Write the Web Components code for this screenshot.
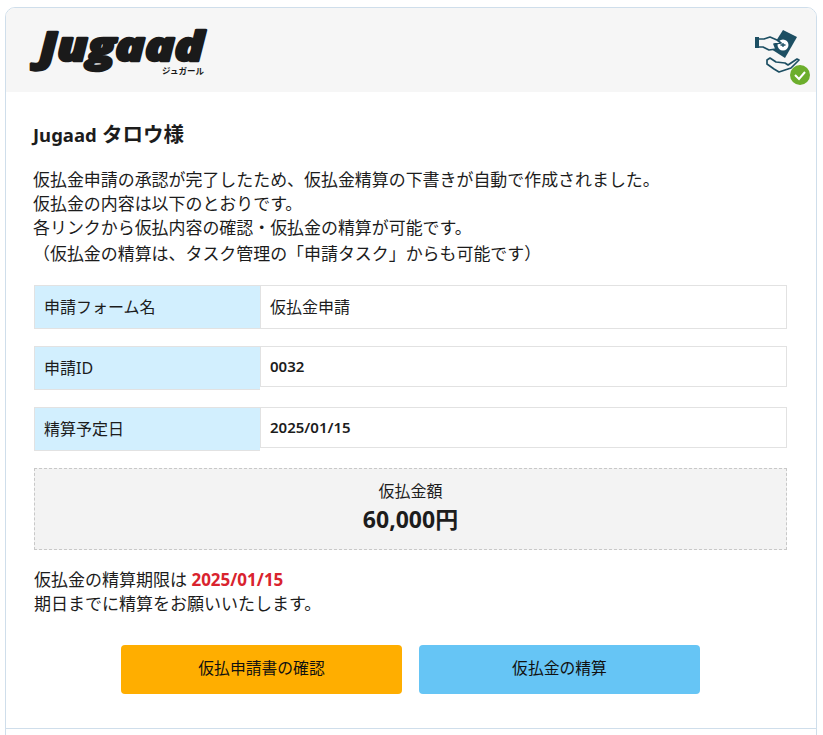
<!DOCTYPE html>
<html lang="ja">
<head>
<meta charset="utf-8">
<title>Jugaad</title>
<style>
  html, body { margin: 0; padding: 0; background: #fff; }
  body { font-family: "Noto Sans", "Noto Sans CJK JP", sans-serif; color: #1c1c1c; height: 735px; overflow: hidden; }
</style>
</head>
<body>
<mail-card>
  <mail-header></mail-header>
  <mail-title><span style="font-size:18.5px">Jugaad</span> タロウ様</mail-title>
  <mail-text>
    <div>仮払金申請の承認が完了したため、仮払金精算の下書きが自動で作成されました。</div>
    <div>仮払金の内容は以下のとおりです。</div>
    <div>各リンクから仮払内容の確認・仮払金の精算が可能です。</div>
    <div style="margin-top:2px">（仮払金の精算は、タスク管理の「申請タスク」からも可能です）</div>
  </mail-text>
  <info-row label="申請フォーム名" style="margin-top:19px">仮払金申請</info-row>
  <info-row label="申請ID" short bold style="margin-top:17px">0032</info-row>
  <info-row label="精算予定日" short bold style="margin-top:17px">2025/01/15</info-row>
  <amount-box label="仮払金額">60,000円</amount-box>
  <limit-note date="2025/01/15"></limit-note>
  <action-bar>
    <action-button color="#ffae00">仮払申請書の確認</action-button>
    <action-button color="#66c5f5">仮払金の精算</action-button>
  </action-bar>
</mail-card>

<script>
class MailCard extends HTMLElement {
  constructor() {
    super();
    this.attachShadow({ mode: 'open' }).innerHTML = `
      <style>
        :host {
          display: block;
          box-sizing: border-box;
          width: 812px;
          height: 760px;
          margin: 7px 0 0 5px;
          border: 1px solid #cfdeeb;
          border-radius: 10px;
          background: #fff;
          overflow: hidden;
        }
        .rule { border-top: 1px solid #cfdeeb; margin-top: 34px; }
      </style>
      <slot name="head"></slot>
      <slot></slot>
      <div class="rule"></div>
    `;
  }
}

class MailHeader extends HTMLElement {
  constructor() {
    super();
    this.attachShadow({ mode: 'open' }).innerHTML = `
      <style>
        :host {
          display: flex;
          justify-content: space-between;
          height: 84px;
          margin-bottom: 29px;
          background: #f6f6f6;
        }
        .logo { width: 200px; height: 72px; margin: 10px 0 0 20px; overflow: visible; }
        .word {
          font: italic 800 40px "Open Sans", sans-serif;
          fill: #1a1a1a;
          stroke: #1a1a1a;
          stroke-width: 2.5px;
          stroke-linejoin: round;
        }
        .kana { font: 700 8.5px "Noto Sans CJK JP", sans-serif; fill: #1a1a1a; }
        .badge { margin: 17px 6px 0 0; }
      </style>
      <svg class="logo" viewBox="0 0 200 72">
        <text class="word" x="13" y="43" textLength="165" lengthAdjust="spacingAndGlyphs">Jugaad</text>
        <text class="kana" x="136" y="56">ジュガール</text>
      </svg>
      <svg class="badge" width="60" height="62" viewBox="0 0 60 62">
        <path d="M33 5 47 12 35 33 21 24Z" fill="#1d4f63"/>
        <circle cx="33" cy="20" r="5.5" fill="#fff"/>
        <path d="M30.5 20h5M33 18v4" stroke="#1d4f63" stroke-width="1.3"/>
        <path d="M8 14 14 14 20 12 27 15 31 18 24 19 26 24 19 25 13 22 8 22Z" fill="#f6f6f6" stroke="#1d4f63" stroke-width="1.7" stroke-linejoin="round"/>
        <path d="M5 12 9 12 9 23 5 23Z" fill="#1d4f63"/>
        <path d="M17 35 20 33 26 37 35 38 38 40 47 34 49 35 41 43 29 47 24 44 17 39Z" fill="#f6f6f6" stroke="#1d4f63" stroke-width="1.7" stroke-linejoin="round"/>
        <circle cx="50" cy="50" r="10" fill="#6cae2c"/>
        <path d="M45 50 49 54 55 47" fill="none" stroke="#fff" stroke-width="2"/>
      </svg>
    `;
  }
  connectedCallback() { this.slot = 'head'; }
}

class MailTitle extends HTMLElement {
  constructor() {
    super();
    this.attachShadow({ mode: 'open' }).innerHTML = `
      <style>
        :host { display: block; margin-left: 27px; font-size: 20.5px; line-height: 26px; font-weight: 700; }
      </style>
      <slot></slot>
    `;
  }
}

class MailText extends HTMLElement {
  constructor() {
    super();
    this.attachShadow({ mode: 'open' }).innerHTML = `
      <style>
        :host { display: block; margin: 20px 0 0 27px; font-size: 16.95px; line-height: 24px; }
      </style>
      <slot></slot>
    `;
  }
}

class InfoRow extends HTMLElement {
  constructor() {
    super();
    this.attachShadow({ mode: 'open' }).innerHTML = `
      <style>
        :host { display: flex; align-items: flex-start; margin: 0 29px 0 28px; font-size: 16px; }
        .label, .value { box-sizing: border-box; height: 44px; border: 1px solid #e2e2e2; padding: 0 9px; line-height: 42px; }
        .label { flex: 0 0 226px; background: #d2effe; border-width: 1px 0 1px 1px; }
        .value { flex: 1; background: #fff; }
        :host([short]) .value { height: 41px; line-height: 39px; }
        :host([bold]) .value { font-size: 15px; font-weight: 600; }
      </style>
      <div class="label"></div>
      <div class="value"><slot></slot></div>
    `;
  }
  connectedCallback() {
    this.shadowRoot.querySelector('.label').textContent = this.getAttribute('label');
  }
}

class AmountBox extends HTMLElement {
  constructor() {
    super();
    this.attachShadow({ mode: 'open' }).innerHTML = `
      <style>
        :host {
          display: block;
          box-sizing: border-box;
          height: 82px;
          margin: 17px 29px 0 28px;
          padding-top: 12px;
          border: 1px dashed #c8c8c8;
          background: #f3f3f3;
          text-align: center;
        }
        .label { font-size: 16px; line-height: 20px; }
        .sum { font-size: 23px; line-height: 36px; font-weight: 700; }
      </style>
      <div class="label"></div>
      <div class="sum"><slot></slot></div>
    `;
  }
  connectedCallback() {
    this.shadowRoot.querySelector('.label').textContent = this.getAttribute('label');
  }
}

class LimitNote extends HTMLElement {
  constructor() {
    super();
    this.attachShadow({ mode: 'open' }).innerHTML = `
      <style>
        :host { display: block; margin: 18px 0 0 28px; font-size: 17px; line-height: 24px; }
        b { color: #d9232e; font-weight: 700; }
      </style>
      仮払金の精算期限は <b></b><br>期日までに精算をお願いいたします。
    `;
  }
  connectedCallback() {
    this.shadowRoot.querySelector('b').textContent = this.getAttribute('date');
  }
}

class ActionBar extends HTMLElement {
  constructor() {
    super();
    this.attachShadow({ mode: 'open' }).innerHTML = `
      <style>
        :host { display: flex; justify-content: center; gap: 17px; margin: 29px 1px 0 0; }
      </style>
      <slot></slot>
    `;
  }
}

class ActionButton extends HTMLElement {
  constructor() {
    super();
    this.attachShadow({ mode: 'open' }).innerHTML = `
      <style>
        :host {
          display: block;
          width: 281px;
          height: 49px;
          border-radius: 4px;
          font-size: 15.8px;
          line-height: 47px;
          text-align: center;
          color: #111;
        }
      </style>
      <slot></slot>
    `;
  }
  connectedCallback() {
    this.style.background = this.getAttribute('color');
  }
}

customElements.define('mail-card', MailCard);
customElements.define('mail-header', MailHeader);
customElements.define('mail-title', MailTitle);
customElements.define('mail-text', MailText);
customElements.define('info-row', InfoRow);
customElements.define('amount-box', AmountBox);
customElements.define('limit-note', LimitNote);
customElements.define('action-bar', ActionBar);
customElements.define('action-button', ActionButton);
</script>
</body>
</html>
